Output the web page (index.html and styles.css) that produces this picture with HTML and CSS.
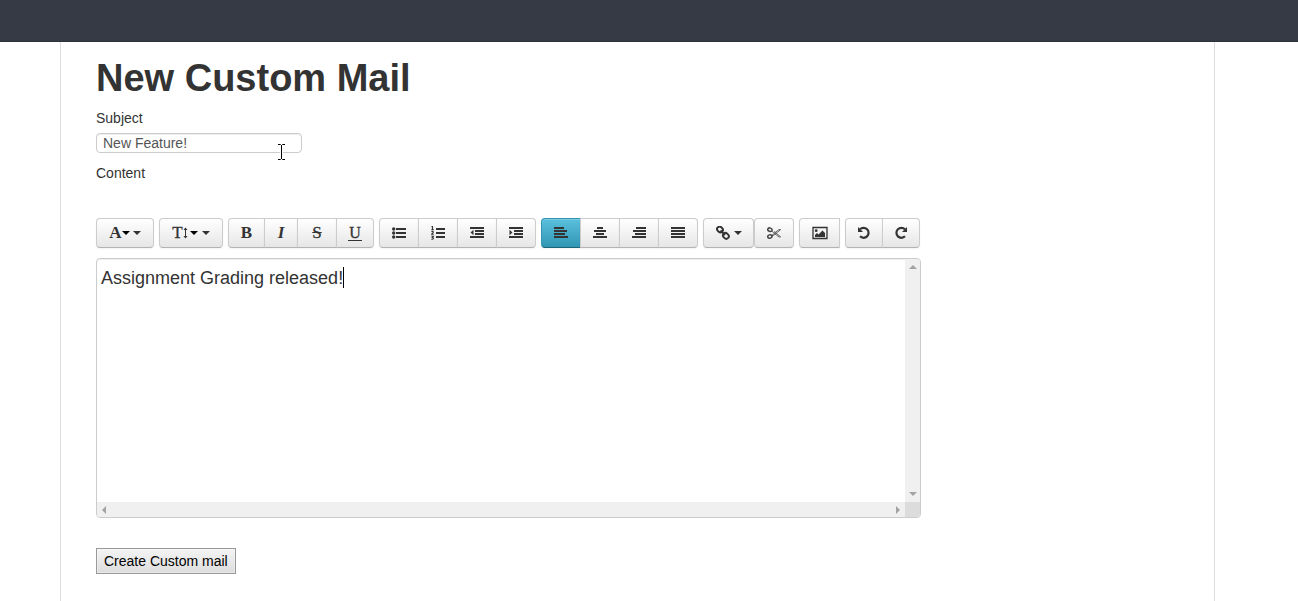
FILE: index.html
```html
<!DOCTYPE html>
<html lang="en">
<head>
<meta charset="utf-8">
<title>New Custom Mail</title>
<link rel="stylesheet" href="styles.css">
</head>
<body>
<header class="navbar"></header>
<main class="container">
  <h1>New Custom Mail</h1>
  <form class="mail-form">
    <label for="subject">Subject</label>
    <div class="subject-field">
      <input id="subject" type="text" value="New Feature!">
      <svg class="pointer" viewBox="0 0 9 18"><path d="M1 1.500h2.500l1 1 1-1H8M1 16.500h2.500l1-1 1 1H8M4.500 2v14" fill="none" stroke="#fff" stroke-width="3"/><path d="M1 1.500h2.500l1 1 1-1H8M1 16.500h2.500l1-1 1 1H8M4.500 2v14" fill="none" stroke="#000"/></svg>
    </div>
    <label for="content">Content</label>

    <div class="toolbar">
      <div class="group">
        <button type="button" class="btn w-font" aria-label="Font"><span class="glyph bold">A</span><i class="caret dark"></i><i class="caret second"></i></button>
      </div>
      <div class="group">
        <button type="button" class="btn w-size" aria-label="Font size"><span class="glyph size">T</span><svg class="updown" viewBox="0 0 5 14"><path d="M2.500 2v10" stroke="#333"/><path d="M.5 4L2.500 1.500 4.500 4zM.5 10L2.500 12.500 4.500 10z" fill="#333"/></svg><i class="caret dark"></i><i class="caret second"></i></button>
      </div>
      <div class="group">
        <button type="button" class="btn w-bold" aria-label="Bold"><span class="glyph bold">B</span></button>
        <button type="button" class="btn w-italic" aria-label="Italic"><span class="glyph bold italic">I</span></button>
        <button type="button" class="btn w-icon" aria-label="Strikethrough"><span class="glyph strike">S</span></button>
        <button type="button" class="btn w-narrow" aria-label="Underline"><span class="glyph underline">U</span></button>
      </div>
      <div class="group">
        <button type="button" class="btn w-icon" aria-label="Bulleted list"><svg class="icon" viewBox="0 0 14 14"><path d="M4 2h10v2H4zM4 6h10v2H4zM4 10h10v2H4z"/><circle cx="1.700" cy="3" r="1.700"/><circle cx="1.700" cy="7" r="1.700"/><circle cx="1.700" cy="11" r="1.700"/></svg></button>
        <button type="button" class="btn w-icon" aria-label="Numbered list"><svg class="icon" viewBox="0 0 14 14"><path d="M5 2h9v2H5zM5 6h9v2H5zM5 10h9v2H5z"/><path d="M.5 1l1-.6v3M.4 3.600h2.300M.5 5.800q1-.9 1.800 0q.2.8-1.800 2.400h2.200M.4 10.300h2l-1 1.200q1.300 0 1 1.200q-.8.900-2 .2" fill="none" stroke="#333" stroke-width="1.100"/></svg></button>
        <button type="button" class="btn w-icon" aria-label="Outdent"><svg class="icon" viewBox="0 0 14 14"><path d="M0 1h14v2H0zM5 4h9v2H5zM5 7h9v2H5zM0 10h14v2H0zM3.500 3.800v5.400L.5 6.500z"/></svg></button>
        <button type="button" class="btn w-icon" aria-label="Indent"><svg class="icon" viewBox="0 0 14 14"><path d="M0 1h14v2H0zM5 4h9v2H5zM5 7h9v2H5zM0 10h14v2H0zM.5 3.800v5.400L3.500 6.500z"/></svg></button>
      </div>
      <div class="group">
        <button type="button" class="btn w-icon active" aria-label="Align left" aria-pressed="true"><svg class="icon" viewBox="0 0 14 14"><path d="M0 1h10v2H0zM0 4h13v2H0zM0 7h11v2H0zM0 10h14v2H0z"/></svg></button>
        <button type="button" class="btn w-icon" aria-label="Align center"><svg class="icon" viewBox="0 0 14 14"><path d="M4 1h6v2H4zM1 4h12v2H1zM3 7h8v2H3zM0 10h14v2H0z"/></svg></button>
        <button type="button" class="btn w-icon" aria-label="Align right"><svg class="icon" viewBox="0 0 14 14"><path d="M4 1h10v2H4zM1 4h13v2H1zM3 7h11v2H3zM0 10h14v2H0z"/></svg></button>
        <button type="button" class="btn w-icon" aria-label="Justify"><svg class="icon" viewBox="0 0 14 14"><path d="M0 1h14v2H0zM0 4h14v2H0zM0 7h14v2H0zM0 10h14v2H0z"/></svg></button>
      </div>
      <div class="group">
        <button type="button" class="btn w-link" aria-label="Link"><svg class="icon" viewBox="0 0 14 14"><g fill="none" stroke="#333" stroke-width="1.900"><rect x="1" y="1" width="6" height="5" rx="2.300" transform="rotate(45 4 3.500)"/><rect x="6.900" y="7.400" width="6" height="5" rx="2.300" transform="rotate(45 9.900 9.900)"/><path d="M4.500 4.500l4.500 4.500"/></g></svg><i class="caret second"></i></button>
        <button type="button" class="btn w-icon separate" aria-label="Unlink"><svg class="icon" viewBox="0 0 14 14"><g fill="none" stroke="#444"><ellipse cx="2.900" cy="3.700" rx="2.200" ry="1.700" stroke-width="1.500" transform="rotate(20 2.900 3.700)"/><ellipse cx="2.900" cy="10.500" rx="2.200" ry="1.700" stroke-width="1.500" transform="rotate(-20 2.900 10.500)"/><path d="M4.500 5l3 2 4.500-3.500 1.600.2L7 9l-2.500 1M4.500 9.500l3-2L12 11l1.600-.2L7 5.500" stroke-width=".8"/></g></svg></button>
      </div>
      <div class="group">
        <button type="button" class="btn w-image" aria-label="Image"><svg class="icon wide" viewBox="0 0 16 14"><path d="M1 1.500h14v11H1z" fill="none" stroke="#333" stroke-width="1.300"/><circle cx="4.200" cy="4.700" r="1.400"/><path d="M3 11V9l2-2 1.500 1.500L10.500 4.500 13 7v4z"/></svg></button>
      </div>
      <div class="group">
        <button type="button" class="btn w-narrow" aria-label="Undo"><svg class="icon" viewBox="0 0 14 14"><path d="M3 3.300A5 5 0 1 1 3 10.300" fill="none" stroke="#333" stroke-width="2.200"/><path d="M1 1v5h5z"/></svg></button>
        <button type="button" class="btn w-narrow" aria-label="Redo"><svg class="icon" viewBox="0 0 14 14"><path d="M11 3.300A5 5 0 1 0 11 10.300" fill="none" stroke="#333" stroke-width="2.200"/><path d="M13 1v5H8z"/></svg></button>
      </div>
    </div>

    <div class="editor">
      <textarea id="content" spellcheck="false">Assignment Grading released!</textarea>
      <span class="text-cursor"></span>
      <div class="scroll vertical"><i class="arrow up"></i><i class="arrow down"></i></div>
      <div class="scroll horizontal"><i class="arrow left"></i><i class="arrow right"></i></div>
      <div class="corner"></div>
    </div>

    <button type="submit" class="submit">Create Custom mail</button>
  </form>
</main>
</body>
</html>
```
FILE: styles.css
```css
* { box-sizing: border-box; }

body {
  margin: 0;
  min-height: 100vh;
  display: flex;
  flex-direction: column;
  background: #fff;
  color: #333;
  font: 14px/20px "Liberation Sans", Arial, sans-serif;
}

.navbar {
  height: 42px;
  background: #363a44;
  border-bottom: 1px solid #2e313b;
}

.container {
  flex: 1;
  margin: 0 83px 0 60px;
  padding: 16px 35px 27px;
  border: solid #ddd;
  border-width: 0 1px;
}

h1 {
  margin: 0 0 10px;
  font-size: 38px;
  line-height: 40px;
}

.mail-form {
  display: flex;
  flex-direction: column;
  align-items: flex-start;
}

.subject-field {
  position: relative;
  margin: 5px 0 10px;
}

.subject-field input {
  display: block;
  width: 206px;
  height: 20px;
  padding: 0 6px;
  border: 1px solid #ccc;
  border-radius: 4px;
  background: #fff;
  box-shadow: inset 0 1px 1px rgba(0, 0, 0, .075);
  color: #555;
  font: inherit;
}

.pointer {
  position: absolute;
  left: 181px;
  top: 10px;
  width: 9px;
  height: 18px;
}

.toolbar {
  display: flex;
  flex-wrap: wrap;
  gap: 5px;
  margin: 35px 0 10px;
}

.group { display: flex; }

.btn {
  display: flex;
  align-items: center;
  justify-content: center;
  height: 30px;
  padding: 0;
  border: 1px solid #ccc;
  border-bottom-color: #b3b3b3;
  background: linear-gradient(#fff, #e6e6e6);
  box-shadow: inset 0 1px 0 rgba(255, 255, 255, .2), 0 1px 2px rgba(0, 0, 0, .05);
  color: #333;
}

.btn + .btn { margin-left: -1px; }
.btn:first-child { border-radius: 4px 0 0 4px; }
.btn:last-child { border-radius: 0 4px 4px 0; }
.btn:only-child { border-radius: 4px; }
.btn + .btn.separate { margin-left: 0; border-radius: 4px; }
.btn:has(+ .separate) { border-radius: 4px; }

.btn.active {
  border-color: #2f96b4 #2f96b4 #1f6377;
  background: linear-gradient(#5bc0de, #2f96b4);
}

.w-font { width: 58px; }
.w-size { width: 64px; }
.w-bold { width: 37px; }
.w-italic { width: 34px; }
.w-icon { width: 40px; }
.w-narrow { width: 38px; }
.w-link { width: 51px; }
.btn.w-image { width: 41px; border-radius: 4px 0 0 4px; }

.icon {
  width: 14px;
  height: 14px;
  fill: #333;
}

.icon.wide { width: 16px; }

.glyph {
  font: 17px/20px "Liberation Serif", serif;
  -webkit-text-stroke: 0.3px #333;
}

.bold {
  font-weight: bold;
  -webkit-text-stroke: 0;
}

.italic { font-style: italic; }
.strike { text-decoration: line-through; }

.underline {
  padding: 0 1px;
  border-bottom: 1px solid #333;
  font-size: 16px;
  line-height: 14px;
}

.updown {
  width: 5px;
  height: 14px;
}

.caret {
  margin-bottom: 1px;
  border: solid transparent;
  border-width: 4px 4px 0;
  border-top-color: #333;
}

.caret.dark { border-top-color: #000; }
.caret.second { margin-left: 3px; }
.icon + .caret.second { margin-left: 4px; }
.updown + .caret { margin-left: 2px; }
.updown ~ .second { margin-left: 4px; }

.editor {
  position: relative;
  display: grid;
  grid-template-columns: 1fr 15px;
  grid-template-rows: 243px 15px;
  width: 100%;
  max-width: 825px;
  overflow: hidden;
  border: 1px solid #ccc;
  border-radius: 4px;
  box-shadow: inset 0 1px 1px rgba(0, 0, 0, .075);
}

.editor textarea {
  display: block;
  padding: 8px 4px;
  border: 0;
  outline: 0;
  resize: none;
  overflow: hidden;
  background: transparent;
  color: #333;
  font: 18px/22px "Liberation Sans", Arial, sans-serif;
}

.text-cursor {
  position: absolute;
  left: 246px;
  top: 8px;
  width: 1px;
  height: 21px;
  background: #000;
}

.scroll {
  display: flex;
  justify-content: space-between;
  align-items: center;
  padding: 5px;
  background: #f0f0f0;
}

.scroll.vertical {
  flex-direction: column;
  padding: 6px 0;
}

.arrow { border: 4px solid transparent; }
.up { border-top: 0; border-bottom-color: #a3a3a3; }
.down { border-bottom: 0; border-top-color: #a3a3a3; }
.left { border-left: 0; border-right-color: #a3a3a3; }
.right { border-right: 0; border-left-color: #a3a3a3; }

.corner { background: #dcdcdc; }

.submit {
  height: 26px;
  margin-top: 30px;
  padding: 0 7px;
  border: 1px solid #999;
  background: linear-gradient(#f4f4f4, #ddd);
  box-shadow: inset 0 0 0 1px rgba(255, 255, 255, .3);
  color: #000;
  font: 14px/22px "Liberation Sans", Arial, sans-serif;
}
```
